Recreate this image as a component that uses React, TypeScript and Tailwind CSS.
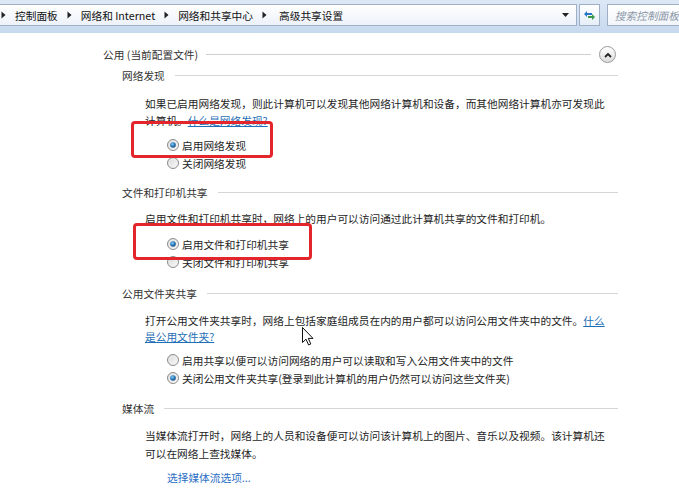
import React from 'react';

const font = "font-['Microsoft_YaHei','Noto_Sans_CJK_SC','Noto_Sans',sans-serif]";

function Arrow() {
  return (
    <svg width="5" height="8" viewBox="0 0 5 8" className="shrink-0">
      <path d="M0.5 0.5 L4.5 4 L0.5 7.5 Z" fill="#222" />
    </svg>
  );
}

function Radio({ checked }: { checked?: boolean }) {
  return (
    <svg width="12" height="12" viewBox="0 0 12 12" className="shrink-0">
      <defs>
        <linearGradient id="rbg" x1="0" y1="0" x2="1" y2="1">
          <stop offset="0" stopColor="#d4d4d4" />
          <stop offset="1" stopColor="#ffffff" />
        </linearGradient>
        <radialGradient id="rdot" cx="0.4" cy="0.35" r="0.7">
          <stop offset="0" stopColor="#8fd1f5" />
          <stop offset="0.5" stopColor="#2b7fc0" />
          <stop offset="1" stopColor="#17457a" />
        </radialGradient>
      </defs>
      <circle cx="6" cy="6" r="5.5" fill="url(#rbg)" stroke="#8c8c8c" strokeWidth="1" />
      <circle cx="6" cy="6" r="4" fill="none" stroke="#eeeeee" strokeWidth="0.8" />
      {checked && <circle cx="6" cy="6" r="2.8" fill="url(#rdot)" />}
    </svg>
  );
}

function Option({ checked, label }: { checked?: boolean; label: string }) {
  return (
    <div className="flex h-[18px] items-center gap-[3px] pl-[167px]">
      <Radio checked={checked} />
      <span>{label}</span>
    </div>
  );
}

function SubHeader({ title, className }: { title: string; className?: string }) {
  return (
    <div className={`flex h-[17px] items-center gap-[10px] pl-[122px] pr-[61px] text-[#333] ${className ?? ''}`}>
      <span className="whitespace-nowrap">{title}</span>
      <div className="h-px flex-1 bg-[#d6d6d6]" />
    </div>
  );
}

export default function App() {
  return (
    <div className={`relative h-[491px] w-[679px] overflow-hidden bg-white text-[10.7px] leading-[17px] text-[#1e1e1e] ${font}`}>
      {/* address bar */}
      <div className="h-[33px] bg-linear-to-b from-[#dde8f5] to-[#c7d9ef] pt-[4px]">
        <div className="flex h-[22px]">
          <div className="flex w-[577px] items-center border border-l-0 border-[#9fb0c6] bg-linear-to-b from-white to-[#edf2f9] pr-[7px]">
            <div className="flex flex-1 items-center gap-[9px] pl-[1px] text-[#111]">
              <Arrow />
              <span>控制面板</span>
              <Arrow />
              <span>网络和 Internet</span>
              <Arrow />
              <span>网络和共享中心</span>
              <Arrow />
              <span className="ml-[3px]">高级共享设置</span>
            </div>
            <svg width="7" height="4" viewBox="0 0 7 4">
              <path d="M0 0 H7 L3.5 4 Z" fill="#222" />
            </svg>
          </div>
          <div className="ml-[2px] flex w-[21px] items-center justify-center border border-[#9fb0c6] bg-linear-to-b from-white to-[#e6eef8]">
            <svg width="13" height="11" viewBox="0 0 13 11">
              <path d="M1 4 L4 1 L4 3 L9 3 L9 5 L4 5 L4 7 Z" fill="#2a78c8" />
              <path d="M12 7 L9 10 L9 8 L5 8 L5 6 L9 6 L9 4 Z" fill="#3a9a4a" />
            </svg>
          </div>
          <div className="ml-[7px] flex flex-1 items-center border border-r-0 border-[#9fb0c6] bg-linear-to-b from-white to-[#f1f5fa] pl-[7px]">
            <span className="whitespace-nowrap italic text-[#8a96a6]">搜索控制面板</span>
          </div>
        </div>
      </div>

      {/* profile header */}
      <div className="mt-[13px] flex h-[17px] items-center gap-[8px] pl-[103px] pr-[63px] text-[#333]">
        <span className="whitespace-nowrap">公用 (当前配置文件)</span>
        <div className="h-px flex-1 bg-[#cfcfcf]" />
        <div className="flex h-[17px] w-[17px] items-center justify-center rounded-full border border-[#9a9a9a] bg-linear-to-b from-white to-[#dcdcdc]">
          <svg width="8" height="6" viewBox="0 0 8 6">
            <path d="M1 5 L4 2 L7 5" fill="none" stroke="#222" strokeWidth="1.8" />
          </svg>
        </div>
      </div>

      {/* network discovery */}
      <SubHeader title="网络发现" className="mt-[4px]" />
      <p className="mt-[11px] w-[611px] pl-[145px]">
        如果已启用网络发现，则此计算机可以发现其他网络计算机和设备，而其他网络计算机亦可发现此计算机。
        <a className="text-[#1f6fb6] underline">什么是网络发现?</a>
      </p>
      <div className="mt-[7px]">
        <Option checked label="启用网络发现" />
        <Option label="关闭网络发现" />
      </div>

      {/* file and printer sharing */}
      <SubHeader title="文件和打印机共享" className="mt-[12px]" />
      <p className="mt-[9px] w-[611px] pl-[145px]">启用文件和打印机共享时，网络上的用户可以访问通过此计算机共享的文件和打印机。</p>
      <div className="mt-[8px]">
        <Option checked label="启用文件和打印机共享" />
        <Option label="关闭文件和打印机共享" />
      </div>

      {/* public folder sharing */}
      <SubHeader title="公用文件夹共享" className="mt-[14px]" />
      <p className="mt-[11px] w-[611px] pl-[145px] leading-[16px]">
        打开公用文件夹共享时，网络上包括家庭组成员在内的用户都可以访问公用文件夹中的文件。
        <a className="text-[#1f6fb6] underline">什么是公用文件夹?</a>
      </p>
      <div className="mt-[6px]">
        <Option label="启用共享以便可以访问网络的用户可以读取和写入公用文件夹中的文件" />
        <Option checked label="关闭公用文件夹共享(登录到此计算机的用户仍然可以访问这些文件夹)" />
      </div>

      {/* media streaming */}
      <SubHeader title="媒体流" className="mt-[13px]" />
      <p className="mt-[10px] w-[611px] pl-[145px] leading-[18px]">
        当媒体流打开时，网络上的人员和设备便可以访问该计算机上的图片、音乐以及视频。该计算机还可以在网络上查找媒体。
      </p>
      <a className="mt-[6px] block pl-[167px] text-[#2a6fc4]">选择媒体流选项...</a>

      {/* red annotation boxes */}
      <div className="absolute left-[131px] top-[121px] h-[37px] w-[142px] rounded-[4px] border-[3px] border-[#e3262b]" />
      <div className="absolute left-[133px] top-[223px] h-[37px] w-[179px] rounded-[4px] border-[3px] border-[#e3262b]" />

      {/* mouse cursor */}
      <svg className="absolute left-[302px] top-[327px]" width="12" height="19" viewBox="0 0 12 19">
        <path d="M0.5 0.5 L0.5 15.5 L4 12.2 L6.6 18 L8.8 17 L6.3 11.4 L11 11.4 Z" fill="#fff" stroke="#111" strokeWidth="1" strokeLinejoin="round" />
      </svg>
    </div>
  );
}
